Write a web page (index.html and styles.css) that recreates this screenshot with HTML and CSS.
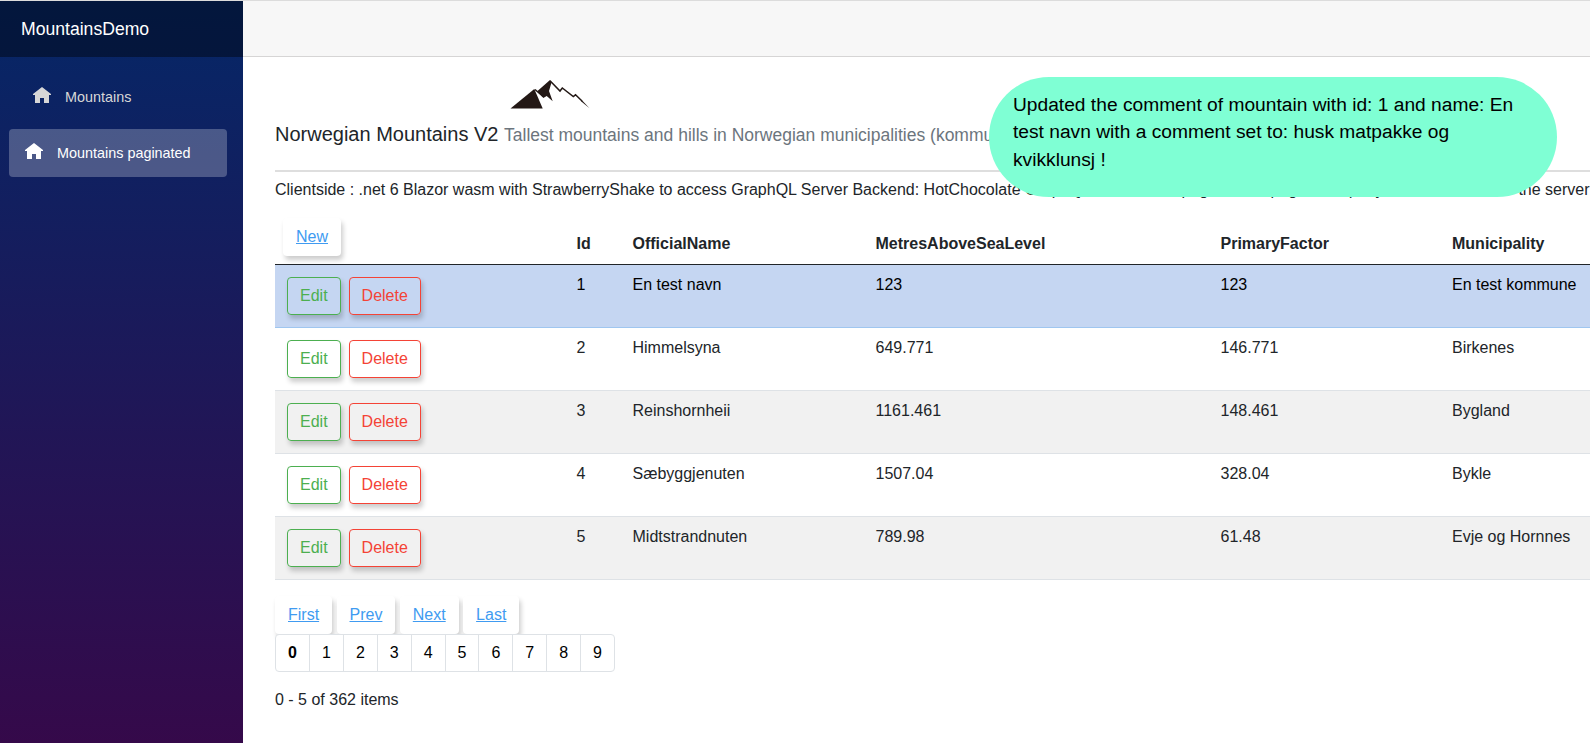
FILE: index.html
```html
<!DOCTYPE html>
<html lang="en">
<head>
<meta charset="utf-8">
<title>MountainsDemo</title>
<link rel="stylesheet" href="styles.css">
</head>
<body>
<div class="page">
  <aside class="sidebar">
    <div class="brand">MountainsDemo</div>
    <nav class="nav">
      <a class="nav-link"><svg class="home" viewBox="0 0 18 16"><path d="M9 0 0 7v1h2v8h5v-5h4v5h5V8h2V7z"/></svg><span>Mountains</span></a>
      <a class="nav-link active"><svg class="home" viewBox="0 0 18 16"><path d="M9 0 0 7v1h2v8h5v-5h4v5h5V8h2V7z"/></svg><span>Mountains paginated</span></a>
    </nav>
  </aside>
  <main class="main">
    <div class="top-row"></div>
    <div class="content">
      <svg class="logo" viewBox="0 0 80 30"><path d="M.5 28.500 24.300 9 32.700 28.500z"/><path d="M27.500 11 40 0 41.500 2.500 39 11 42.700 21.300 36.700 16 33.300 18z"/><path class="ridge" d="M25 9.500 33 16.500M40 .8 50 11 52.300 8 63.300 16.500 65.500 14.800 72 21"/><path d="M71.500 19.800 79.500 28.300 71 21.200z"/></svg>
      <h5 class="title">Norwegian Mountains V2 <small>Tallest mountains and hills in Norwegian municipalities (kommuner)</small></h5>
      <hr class="rule">
      <p class="intro">Clientside : .net 6 Blazor wasm with StrawberryShake to access GraphQL Server Backend: HotChocolate <span class="intro-middle">GraphQL. Data in the page on the page with query data sent from</span> the server</p>
      <table class="table">
        <colgroup><col class="c-actions"><col class="c-id"><col class="c-name"><col class="c-metres"><col class="c-factor"><col class="c-mun"></colgroup>
        <thead><tr><th><a class="btn link">New</a></th><th>Id</th><th>OfficialName</th><th>MetresAboveSeaLevel</th><th>PrimaryFactor</th><th>Municipality</th></tr></thead>
        <tbody>
          <tr class="selected"><td><div class="actions"><button class="btn edit">Edit</button><button class="btn delete">Delete</button></div></td><td>1</td><td>En test navn</td><td>123</td><td>123</td><td>En test kommune</td></tr>
          <tr><td><div class="actions"><button class="btn edit">Edit</button><button class="btn delete">Delete</button></div></td><td>2</td><td>Himmelsyna</td><td>649.771</td><td>146.771</td><td>Birkenes</td></tr>
          <tr class="striped"><td><div class="actions"><button class="btn edit">Edit</button><button class="btn delete">Delete</button></div></td><td>3</td><td>Reinshornheii</td><td>1161.461</td><td>148.461</td><td>Bygland</td></tr>
          <tr><td><div class="actions"><button class="btn edit">Edit</button><button class="btn delete">Delete</button></div></td><td>4</td><td>Sæbyggjenuten</td><td>1507.04</td><td>328.04</td><td>Bykle</td></tr>
          <tr class="striped"><td><div class="actions"><button class="btn edit">Edit</button><button class="btn delete">Delete</button></div></td><td>5</td><td>Midtstrandnuten</td><td>789.98</td><td>61.48</td><td>Evje og Hornnes</td></tr>
        </tbody>
      </table>
      <div class="pager"><a class="btn link">First</a><a class="btn link">Prev</a><a class="btn link">Next</a><a class="btn link">Last</a></div>
      <div class="pages"><b>0</b><span>1</span><span>2</span><span>3</span><span>4</span><span>5</span><span>6</span><span>7</span><span>8</span><span>9</span></div>
      <p class="count">0 - 5 of 362 items</p>
    </div>
  </main>
</div>
<div class="toast">Updated the comment of mountain with id: 1 and name: En test navn with a comment set to: husk matpakke og kvikklunsj !</div>
</body>
</html>
```
FILE: styles.css
```css
* { box-sizing: border-box; }
body {
  margin: 0;
  height: 743px;
  overflow: hidden;
  font: 16px/24px "Liberation Sans", Arial, sans-serif;
  color: #212529;
  background: #fff;
}
.page { display: flex; height: 743px; border-top: 1px solid #dcdcdc; }
.sidebar {
  width: 243px;
  flex: none;
  background: linear-gradient(180deg, #052767 0, #3a0647 820px);
}
.brand {
  height: 56px;
  padding-left: 21px;
  line-height: 56px;
  font-size: 17.6px;
  color: #fff;
  background: rgba(0, 0, 0, .4);
}
.nav { padding: 16px 16px 0 9px; }
.nav-link {
  display: flex;
  align-items: center;
  height: 48px;
  margin-bottom: 8px;
  padding-left: 24px;
  border-radius: 4px;
  font-size: 14.4px;
  color: #d7d7d7;
}
.nav-link.active { padding-left: 16px; color: #fff; background: rgba(255, 255, 255, .25); }
.home { width: 18px; height: 16px; margin: -4px 14px 0 0; fill: currentColor; }
.main { flex: 1; min-width: 0; overflow: hidden; }
.top-row { height: 56px; background: #f7f7f7; border-bottom: 1px solid #d6d5d5; }
.content { padding: 23px 0 0 32px; white-space: nowrap; }
.logo { display: block; width: 80px; height: 30px; margin-left: 235px; fill: #231815; }
.ridge { fill: none; stroke: #231815; stroke-width: 1.5; }
.title { margin: 12px 0 0; font-size: 20px; line-height: 24px; font-weight: 400; }
.title small { font-size: 17.5px; color: #6c757d; }
.rule { margin: 23px 0 6px; border: 0; height: 2px; background: #dedede; }
.intro { margin: 0; }
.intro-middle { display: inline-block; width: 489px; overflow: hidden; vertical-align: top; }
.table { table-layout: fixed; width: 1365px; margin-top: 14px; border-collapse: separate; border-spacing: 0; }
.c-actions { width: 289.500px; }
.c-id { width: 56px; }
.c-name { width: 243px; }
.c-metres { width: 345px; }
.c-factor { width: 231.500px; }
.c-mun { width: 200px; }
th { height: 49px; padding: 0 12px 8px; text-align: left; vertical-align: bottom; border-bottom: 1px solid #212529; }
th:first-child { padding-left: 8px; }
td { height: 63px; padding: 12px 12px; line-height: 16px; vertical-align: top; border-bottom: 1px solid #dee2e6; }
.selected td { background: #c5d6f2; color: #000; border-color: #9fc6f0; }
.striped td { background: #f1f1f1; }
.actions { display: flex; gap: 8px; }
.btn {
  display: inline-block;
  height: 38px;
  padding: 6px 12px;
  border: 1px solid transparent;
  border-radius: 4px;
  background: transparent;
  font: 16px/24px "Liberation Sans", Arial, sans-serif;
  box-shadow: 2px 4px 5px rgba(0, 0, 0, .2);
}
.edit { border-color: #4caf50; color: #4caf50; }
.delete { border-color: #f44336; color: #f44336; }
.link { background: #fff; color: #409bf1; text-decoration: underline; }
.pager { display: flex; gap: 4.400px; margin-top: 16px; }
.pages {
  position: relative;
  display: inline-flex;
  border: 1px solid #dee2e6;
  border-radius: 4px;
  background: #fff;
  color: #000;
}
.pages > * { width: 33.900px; height: 36px; line-height: 35px; text-align: center; }
.pages > :first-child { width: 33px; }
.pages > * + * { border-left: 1px solid #dee2e6; }
.count { margin: 16px 0 0; }
.toast {
  position: absolute;
  left: 989px;
  top: 77px;
  width: 568px;
  height: 120px;
  padding: 14px 24px;
  border-radius: 60px;
  background: #7fffd4;
  color: #000;
  font-size: 19.2px;
  line-height: 27.4px;
}
```
